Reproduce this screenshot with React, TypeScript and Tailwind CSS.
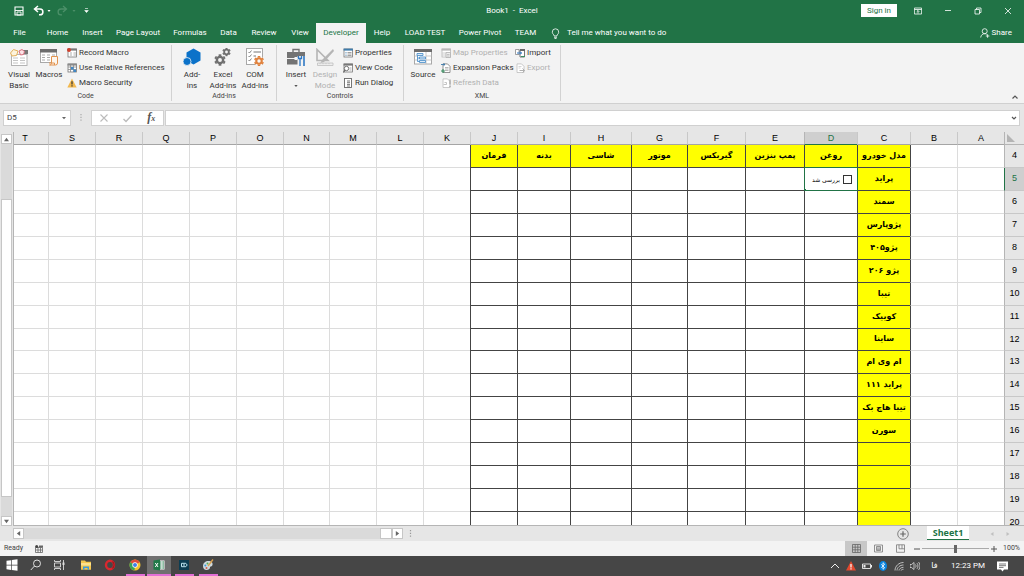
import type { ReactNode } from "react";
import clsx from "clsx";

const UI_FONT = "font-['Roboto','Noto_Sans',sans-serif]";
const GRID_FONT = "font-['Liberation_Sans',sans-serif]";
const FA_FONT = "font-['DejaVu_Sans',sans-serif]";

function Svg({
  size = "size-[18px]",
  box = 18,
  children,
}: {
  size?: string;
  box?: number;
  children: ReactNode;
}) {
  return (
    <svg className={clsx("shrink-0", size)} viewBox={`0 0 ${box} ${box}`} fill="none" aria-hidden="true">
      {children}
    </svg>
  );
}

/* ---------- ribbon icons ---------- */

function Gear({ cx, cy, r, color }: { cx: number; cy: number; r: number; color: string }) {
  return (
    <g stroke={color}>
      <circle cx={cx} cy={cy} r={r * 0.55} strokeWidth={r * 0.42} />
      {[0, 60, 120, 180, 240, 300].map((a) => (
        <path
          key={a}
          d={`M${cx} ${cy - r * 0.7}V${cy - r}`}
          strokeWidth={r * 0.48}
          transform={`rotate(${a} ${cx} ${cy})`}
        />
      ))}
    </g>
  );
}

const VisualBasicIcon = () => (
  <Svg size="h-[18px] w-5">
    <rect x="1.5" y="6.5" width="15.5" height="11" fill="#fff" stroke="#b4b4b4" />
    <path d="M11 2h7v4h-7z" fill="#777" />
    <path d="M3 10h5M3 12.5h5M3 15h5M10 10h5M10 12.5h5M10 15h5" stroke="#c4c4c4" />
    <path d="M3.500 1.500 8 3 6.500 7.500 2 8 .5 5z" fill="#fdf3dc" stroke="#e3b15a" />
    <path d="m9 3 3-1.500 2.500 2-1 3-3 .5z" fill="#fbe3e6" stroke="#d9707f" />
  </Svg>
);

const MacrosIcon = () => (
  <Svg>
    <rect x=".5" y="1.500" width="16" height="13" fill="#fff" stroke="#a8a8a8" />
    <path d="M0 1h17v3.500H0z" fill="#6d6d6d" />
    <path d="M2 7h3M7 7h3M12 7h3M2 9.500h3M7 9.500h3M2 12h3M7 12h3" stroke="#aaa" />
    <path d="M11.500 8.500h6v6.500a2 2 0 0 1-2 2H9.500c1.500 0 2-1 2-2z" fill="#fdf6ee" stroke="#e29450" />
    <path d="M9 15h5.500v2" stroke="#e29450" />
  </Svg>
);

const AddinsIcon = () => (
  <Svg>
    <path d="m10.500.5 7 4v8l-7 4-7-4v-8z" fill="#0b72c9" />
    <circle cx="4" cy="13.500" r="4" fill="#0b72c9" stroke="#f3f3f3" strokeWidth=".8" />
  </Svg>
);

const ExcelAddinsIcon = () => (
  <Svg>
    <Gear cx={6} cy={12} r={5.7} color="#6f6f6f" />
    <Gear cx={12.5} cy={4} r={4.2} color="#6f6f6f" />
  </Svg>
);

const ComAddinsIcon = () => (
  <Svg>
    <rect x=".5" y=".5" width="16" height="16" fill="#fff" stroke="#a8a8a8" />
    <path d="m2.500 4 1 1 2-2.500M2.500 8l1 1 2-2.500M2.500 12l1 1 2-2.500" stroke="#777" strokeWidth=".9" />
    <path d="M7.500 4H15M7.500 8H10" stroke="#777" />
    <circle cx="13" cy="13" r="5" fill="#f8f8f8" />
    <Gear cx={13} cy={13} r={5} color="#e0813c" />
  </Svg>
);

const InsertIcon = () => (
  <Svg>
    <path d="M6 4V1.500h6V4" stroke="#737373" strokeWidth="1.400" />
    <path d="M0 4h18v6H0zM0 11h18v5.500H0z" fill="#737373" />
    <path d="M7.500 9h3v3h-3z" fill="#f3f3f3" />
    <path d="M10.500 8h8v10h-8z" fill="#f3f3f3" />
    <path d="M11.500 8v2.500h3V8M13 10.500V18" stroke="#2f78c4" strokeWidth="1.300" />
    <path d="M17 8v10" stroke="#2f78c4" strokeWidth="1.600" />
  </Svg>
);

const DesignIcon = () => (
  <Svg>
    <path d="M1 1.500v11h11z" stroke="#b5b5b5" strokeWidth="1.600" />
    <path d="m17 1-11 11-1.500 3L8 14 18 3z" fill="#b5b5b5" />
    <path d="M1.500 15h15.500v2.500H1.500z" fill="#eee" stroke="#bfbfbf" strokeWidth=".8" />
    <path d="M4 15v1.200M7 15v1.200M10 15v1.200M13 15v1.200" stroke="#bfbfbf" strokeWidth=".7" />
  </Svg>
);

const SourceIcon = () => (
  <Svg>
    <rect x=".5" y="1.500" width="17" height="14.500" fill="#fff" stroke="#a8a8a8" />
    <path d="M0 1h18v3H0z" fill="#6d6d6d" />
    <path d="M12 4v12M12 8h5.500M12 12h5.500M.5 8h3M.5 12h3" stroke="#bbb" strokeWidth=".8" />
    <path
      d="M3 5.500h6v2H3zM5.500 9h6v2h-6zM5.500 12.500h6v2h-6zM3.500 8v5.500h2M3.500 10h2"
      fill="#dcebf8"
      stroke="#4189c7"
      strokeWidth=".8"
    />
  </Svg>
);

function SmallTable({
  color = "#777",
  head = color,
  children,
}: {
  color?: string;
  head?: string;
  children?: ReactNode;
}) {
  return (
    <Svg size="size-[10px]" box={10}>
      <rect x="1" y="1" width="8.500" height="8" fill="#fff" stroke={color} strokeWidth=".8" />
      <path d="M.6.6h9.300v2H.6z" fill={head} />
      {children}
    </Svg>
  );
}

const RecordIcon = () => (
  <SmallTable>
    <path d="M3 5h2M6.500 5H9M3 7h2M6.500 7H9" stroke="#999" strokeWidth=".8" />
    <circle cx="2" cy="2" r="2" fill="#d0402b" />
  </SmallTable>
);
const RelativeIcon = () => (
  <SmallTable head="#8a8a8a">
    <path d="M1 4h8.500M1 6.500h8.500M3.500 1v8M6.500 1v8" stroke="#888" strokeWidth=".8" />
    <path d="M4 4h2.500v2.500H4zM6.500 6.500H9V9H6.500z" fill="#4189c7" />
  </SmallTable>
);
const SecurityIcon = () => (
  <Svg size="size-[10px]" box={10}>
    <path d="M5 .5 9.700 9.500H.3z" fill="#f2b84e" />
    <path d="M5 3.200v3.200M5 7.300v1.200" stroke="#333" strokeWidth="1.200" />
  </Svg>
);
const PropertiesIcon = () => (
  <SmallTable head="#3f7cab">
    <path d="M2.500 4.500h1M2.500 6h1M2.500 7.500h1" stroke="#3f7cab" strokeWidth=".8" />
    <path d="M4.500 4.500h4M4.500 6h4M4.500 7.500h4" stroke="#888" strokeWidth=".8" />
  </SmallTable>
);
const ViewCodeIcon = () => (
  <SmallTable>
    <path d="M6.500 5h2M6.500 7h2" stroke="#999" strokeWidth=".8" />
    <circle cx="3.500" cy="5.500" r="2.200" fill="#fff" stroke="#666" strokeWidth=".9" />
    <path d="M2 7.200.3 9.500" stroke="#666" strokeWidth="1.200" />
  </SmallTable>
);
const RunDialogIcon = () => (
  <Svg size="size-[10px]" box={10}>
    <rect x="1.500" y=".5" width="7" height="9" fill="#fff" stroke="#666" strokeWidth=".9" />
    <path d="M4 3h3M4 4.700h3M4 6.400h3M4 8h3" stroke="#555" strokeWidth=".8" />
  </Svg>
);
const MapIcon = () => (
  <SmallTable color="#b8b8b8">
    <path d="M1 5h4M1 7h4" stroke="#c4c4c4" strokeWidth=".8" />
    <path d="M5 4.500h4.500V9.500H5z" fill="#eee" stroke="#b0b0b0" strokeWidth=".8" />
    <path d="M6 6.500h2.500M6 8h2.500" stroke="#b0b0b0" strokeWidth=".7" />
  </SmallTable>
);

function PageIcon({ color, children }: { color: string; children: ReactNode }) {
  return (
    <Svg size="size-[10px]" box={10}>
      <path d="M2 .9h4.500L9 3.400v6.100H2z" fill="#fff" stroke={color} strokeWidth=".8" />
      {children}
    </Svg>
  );
}
const ExpansionIcon = () => (
  <PageIcon color="#777">
    <path d="M4 4.500h3.500M4 6h3.500M4 7.500h3.500" stroke="#999" strokeWidth=".7" />
    <path d="M0 1.500h4M2.500.3 4 1.500 2.500 2.700" stroke="#3f7cab" strokeWidth=".9" />
    <path d="M0 8h4M2 6v4" stroke="#3a8f62" strokeWidth="1.100" />
  </PageIcon>
);
const RefreshIcon = () => (
  <PageIcon color="#bdbdbd">
    <path d="M3.500 4.500h2v2h-3" stroke="#b5b5b5" strokeWidth=".8" />
    <path d="M9 1.500v5M9 7.700v1.600" stroke="#aaa" strokeWidth="1.400" />
  </PageIcon>
);
const ImportIcon = () => (
  <Svg size="size-[10px]" box={10}>
    <path d="M.5 1.500h3.500v5H.5z" fill="#fff" stroke="#888" strokeWidth=".8" />
    <path d="M5 1.500h4.500v7.500H5z" fill="#fff" stroke="#666" strokeWidth=".9" />
    <path d="M5 1h5v2H5z" fill="#666" />
    <path d="M2 5h4.500M5 3.500 6.500 5 5 6.500" stroke="#2f78c4" strokeWidth="1" />
    <path d="M6 8.500h4" stroke="#3a8f62" />
  </Svg>
);
const ExportIcon = () => (
  <PageIcon color="#bdbdbd">
    <path d="M3.500 3.500h3M3.500 5h2" stroke="#c4c4c4" strokeWidth=".7" />
    <path d="M4.500 7.500h5M7.500 5.500l2 2-2 2" stroke="#b0b0b0" />
  </PageIcon>
);

/* ---------- title bar and tabs ---------- */

function WindowButton({ label, children }: { label: string; children: ReactNode }) {
  return (
    <button aria-label={label} className="flex h-5 w-[30px] items-center justify-center">
      <Svg size="size-2" box={8}>
        {children}
      </Svg>
    </button>
  );
}

function TitleBar() {
  return (
    <header className="grid h-[23px] grid-cols-[1fr_auto_1fr] items-center pb-[2px] text-white">
      <div className="flex items-center pl-[14px]">
        <button aria-label="Save">
          <Svg size="size-[10px]" box={10}>
            <path d="M1 1h8v8H1z" stroke="#fff" strokeWidth="1.100" />
            <path d="M3 6h4v3H3zM1 4.500h8" stroke="#fff" strokeWidth=".9" />
          </Svg>
        </button>
        <button aria-label="Undo" className="ml-[9px] flex items-center gap-[3px]">
          <Svg size="size-[11px]" box={11}>
            <path d="M5 1 1.500 4 5 7M1.500 4H7a2.800 2.800 0 0 1 0 5.800H6" stroke="#fff" strokeWidth="1.500" />
          </Svg>
          <Svg size="size-1" box={4}>
            <path d="M.5 1h3L2 3z" fill="#fff" />
          </Svg>
        </button>
        <button aria-label="Redo" disabled className="ml-[6px] flex items-center gap-1">
          <Svg size="size-[11px]" box={11}>
            <path d="m6 1 3.500 3L6 7m3.500-3H4a2.800 2.800 0 0 0 0 5.800h1" stroke="#4c9069" strokeWidth="1.300" />
          </Svg>
          <Svg size="size-1" box={4}>
            <path d="M.5 1h3L2 3z" fill="#4c9069" />
          </Svg>
        </button>
        <button aria-label="Customize toolbar" className="ml-2">
          <Svg size="size-[5px]" box={5}>
            <path d="M1 .5h3M.7 2.500h3.600L2.500 4.500z" stroke="#fff" strokeWidth=".6" fill="#fff" />
          </Svg>
        </button>
      </div>
      <h1 className="text-[8px] whitespace-pre">Book1  -  Excel</h1>
      <div className="flex items-center justify-end pr-px">
        <button className="mr-[6px] h-[13px] w-9 bg-white text-[8px] leading-[13px] text-[#217346]">Sign in</button>
        <WindowButton label="Ribbon display options">
          <path d="M.4 1h7.200v6H.4zM.4 2.500h7.200M4 6.500v-3M2.700 4.800 4 3.500l1.300 1.300" stroke="#fff" strokeWidth=".8" />
        </WindowButton>
        <WindowButton label="Minimize">
          <path d="M1 3.500h6" stroke="#fff" strokeWidth=".8" />
        </WindowButton>
        <WindowButton label="Restore">
          <path d="M1 2.500h4.500V7H1zM2.500 2.500V1H7v4.500H5.500" stroke="#fff" strokeWidth=".8" />
        </WindowButton>
        <WindowButton label="Close">
          <path d="m1 1 6 6M7 1 1 7" stroke="#fff" strokeWidth=".8" />
        </WindowButton>
      </div>
    </header>
  );
}

const TABS = [
  { name: "File", width: "w-[39px]" },
  { name: "Home", width: "w-[37px]" },
  { name: "Insert", width: "w-[33px]" },
  { name: "Page Layout", width: "w-[58px]" },
  { name: "Formulas", width: "w-[46px]" },
  { name: "Data", width: "w-[31px]" },
  { name: "Review", width: "w-10" },
  { name: "View", width: "w-8" },
  { name: "Developer", width: "w-[50px]" },
  { name: "Help", width: "w-8" },
  { name: "LOAD TEST", width: "w-[54px]" },
  { name: "Power Pivot", width: "w-14" },
  { name: "TEAM", width: "w-[35px]" },
];

function TabStrip() {
  return (
    <nav className="flex h-5 items-stretch text-[8px] whitespace-nowrap text-white">
      {TABS.map((tab) => (
        <button
          key={tab.name}
          className={clsx("shrink-0 text-center", tab.width, tab.name === "Developer" && "bg-[#f3f3f3] text-[#217346]")}
        >
          {tab.name}
        </button>
      ))}
      <button className="ml-[7px] flex items-center gap-[6px]">
        <Svg size="size-[11px]" box={11}>
          <path
            d="M4 8V7C2.800 6 2.300 5 2.300 4a3.200 3.200 0 0 1 6.400 0c0 1-.5 2-1.700 3v1zM4 9.300h3M4.500 10.500h2"
            stroke="#fff"
            strokeWidth=".8"
          />
        </Svg>
        Tell me what you want to do
      </button>
      <button className="mr-3 ml-auto flex items-center gap-[2px]">
        <Svg size="size-[10px]" box={10}>
          <circle cx="4.700" cy="3.200" r="2.500" stroke="#fff" strokeWidth=".8" />
          <path
            d="M.7 9.500c.3-2.500 1.800-3.800 4-3.800.8 0 1.500.2 2 .6M5.800 8h3.600M7.600 6.200v3.600"
            stroke="#fff"
            strokeWidth=".8"
          />
        </Svg>
        Share
      </button>
    </nav>
  );
}

/* ---------- ribbon ---------- */

function BigButton({
  icon,
  lines,
  width,
  disabled,
  menu,
}: {
  icon: ReactNode;
  lines: string[];
  width: string;
  disabled?: boolean;
  menu?: boolean;
}) {
  return (
    <button
      disabled={disabled}
      className={clsx("flex shrink-0 flex-col items-center pt-[3px]", width, disabled && "text-[#b1b1b1]")}
    >
      {icon}
      <span className="mt-[3px] flex flex-col leading-[11px] whitespace-nowrap">
        {lines.map((line) => (
          <span key={line}>{line}</span>
        ))}
      </span>
      {menu && (
        <Svg size="mt-1 size-1" box={4}>
          <path d="M.3 1h3.400L2 3z" fill="#555" />
        </Svg>
      )}
    </button>
  );
}

function SmallButton({ icon, label, disabled }: { icon: ReactNode; label: string; disabled?: boolean }) {
  return (
    <button
      disabled={disabled}
      className={clsx("flex h-[15px] items-center gap-[2px] whitespace-nowrap", disabled && "text-[#b1b1b1]")}
    >
      {icon}
      {label}
    </button>
  );
}

function Group({ name, width, children }: { name: string; width: string; children: ReactNode }) {
  return (
    <section className={clsx("my-[2px] flex shrink-0 flex-col border-r border-[#d2d2d2]", width)}>
      <div className="flex h-12 items-start">{children}</div>
      <h2 className="text-center text-[7px] leading-[10px] text-[#444]">{name}</h2>
    </section>
  );
}

function Ribbon() {
  return (
    <div className="flex h-[61px] border-b border-[#d0d0d0] bg-[#f3f3f3] text-[8px] text-[#333]">
      <Group name="Code" width="w-[172px]">
        <BigButton icon={<VisualBasicIcon />} lines={["Visual", "Basic"]} width="ml-1 w-[30px]" />
        <BigButton icon={<MacrosIcon />} lines={["Macros"]} width="w-[30px]" />
        <div className="ml-[3px]">
          <SmallButton icon={<RecordIcon />} label="Record Macro" />
          <SmallButton icon={<RelativeIcon />} label="Use Relative References" />
          <SmallButton icon={<SecurityIcon />} label="Macro Security" />
        </div>
      </Group>
      <Group name="Add-ins" width="w-[105px]">
        <BigButton icon={<AddinsIcon />} lines={["Add-", "ins"]} width="ml-1 w-8" />
        <BigButton icon={<ExcelAddinsIcon />} lines={["Excel", "Add-ins"]} width="w-[30px]" />
        <BigButton icon={<ComAddinsIcon />} lines={["COM", "Add-ins"]} width="w-[34px]" />
      </Group>
      <Group name="Controls" width="w-[127px]">
        <BigButton icon={<InsertIcon />} lines={["Insert"]} width="ml-1 w-[30px]" menu />
        <BigButton icon={<DesignIcon />} lines={["Design", "Mode"]} width="w-7" disabled />
        <div className="ml-1">
          <SmallButton icon={<PropertiesIcon />} label="Properties" />
          <SmallButton icon={<ViewCodeIcon />} label="View Code" />
          <SmallButton icon={<RunDialogIcon />} label="Run Dialog" />
        </div>
      </Group>
      <Group name="XML" width="w-[157px]">
        <BigButton icon={<SourceIcon />} lines={["Source"]} width="ml-1 w-[30px]" />
        <div className="ml-[3px] w-[74px]">
          <SmallButton icon={<MapIcon />} label="Map Properties" disabled />
          <SmallButton icon={<ExpansionIcon />} label="Expansion Packs" />
          <SmallButton icon={<RefreshIcon />} label="Refresh Data" disabled />
        </div>
        <div>
          <SmallButton icon={<ImportIcon />} label="Import" />
          <SmallButton icon={<ExportIcon />} label="Export" disabled />
        </div>
      </Group>
      <button aria-label="Collapse ribbon" className="mt-auto mr-[5px] mb-[2px] ml-auto">
        <Svg size="size-2" box={8}>
          <path d="m1.500 5.500 2.500-2.500 2.500 2.500" stroke="#555" strokeWidth="1.200" />
        </Svg>
      </button>
    </div>
  );
}

function FormulaBar() {
  return (
    <div className="flex h-7 items-center pr-1 pl-[3px]">
      <div className="flex h-4 w-[68px] items-center border border-[#d0d0d0] bg-white">
        <input
          aria-label="Name box"
          defaultValue="D5"
          className="w-12 min-w-0 flex-1 pl-[3px] text-[8px] text-[#444] outline-none"
        />
        <button aria-label="Names" className="mr-1">
          <Svg size="size-1" box={4}>
            <path d="M0 1h4L2 3.300z" fill="#666" />
          </Svg>
        </button>
      </div>
      <Svg size="mx-[6px] size-2" box={8}>
        <path d="M4 0v8" stroke="#aaa" strokeWidth="1.200" strokeDasharray="1.200 1.600" />
      </Svg>
      <div className="flex h-4 w-[73px] items-center justify-around border border-[#d0d0d0] bg-white">
        <button aria-label="Cancel">
          <Svg size="size-2" box={8}>
            <path d="m.5.5 7 7M7.500.5l-7 7" stroke="#bbb" strokeWidth="1.100" />
          </Svg>
        </button>
        <button aria-label="Enter">
          <Svg size="size-[9px]" box={9}>
            <path d="m.5 5 2.500 2.500 5.500-6" stroke="#bbb" strokeWidth="1.400" />
          </Svg>
        </button>
        <button
          aria-label="Insert function"
          className="font-['Liberation_Serif',serif] text-[12px] leading-3 font-bold text-[#555] italic"
        >
          f<span className="text-[8px]">x</span>
        </button>
      </div>
      <div className="ml-px flex h-4 flex-1 items-center border border-[#d0d0d0] bg-white">
        <input aria-label="Formula" className="h-3 flex-1 pl-1 text-[8px] outline-none" />
        <button aria-label="Expand formula bar" className="mr-[2px]">
          <Svg size="size-[6px]" box={6}>
            <path d="m1 2 2 2 2-2" stroke="#555" strokeWidth="1.200" />
          </Svg>
        </button>
      </div>
    </div>
  );
}

/* ---------- worksheet ---------- */

// The sheet runs right to left, so column A comes first beside the row numbers.
const COLUMNS = [
  { id: "A", width: "w-[47px]" },
  { id: "B", width: "w-[47px]" },
  { id: "C", width: "w-[53px]", title: "مدل خودرو" },
  { id: "D", width: "w-[53px]", title: "روغن" },
  { id: "E", width: "w-[59px]", title: "پمپ بنزین" },
  { id: "F", width: "w-[58px]", title: "گیربکس" },
  { id: "G", width: "w-[56px]", title: "موتور" },
  { id: "H", width: "w-[61px]", title: "شاسی" },
  { id: "I", width: "w-[53px]", title: "بدنه" },
  { id: "J", width: "w-[47px]", title: "فرمان" },
  { id: "K", width: "w-[47px]" },
  { id: "L", width: "w-[47px]" },
  { id: "M", width: "w-[47px]" },
  { id: "N", width: "w-[46px]" },
  { id: "O", width: "w-[47px]" },
  { id: "P", width: "w-[47px]" },
  { id: "Q", width: "w-[47px]" },
  { id: "R", width: "w-[47px]" },
  { id: "S", width: "w-[47px]" },
  { id: "T", width: "w-[47px]" },
];

const CARS = [
  "پراید",
  "سمند",
  "پژوپارس",
  "پژو۴۰۵",
  "پژو ۲۰۶",
  "تیبا",
  "کوییک",
  "ساینا",
  "ام وی ام",
  "پراید ۱۱۱",
  "تیبا هاچ بک",
  "سورن",
];

const FIRST_ROW = 4;
const ROWS = Array.from({ length: 17 }, (_, i) => FIRST_ROW + i);

function Cell({ row, col }: { row: number; col: (typeof COLUMNS)[number] }) {
  const bordered = col.title !== undefined;
  const filled = bordered && (row === FIRST_ROW || col.id === "C");
  const selected = row === 5 && col.id === "D";
  const text = row === FIRST_ROW ? col.title : col.id === "C" ? CARS[row - FIRST_ROW - 1] : undefined;

  return (
    <td
      className={clsx(
        "relative border-b border-l p-0 text-center align-middle text-[8px] leading-[11px] font-bold whitespace-nowrap text-black",
        FA_FONT,
        !selected && "pb-[2px]",
        bordered ? "border-b-[#444]" : "border-b-[#dcdcdc]",
        bordered || col.id === "B" ? "border-l-[#444]" : "border-l-[#dcdcdc]",
        filled ? "bg-[#ffff00]" : "bg-white",
      )}
    >
      {text}
      {selected && (
        <>
          <label className="flex items-center gap-[3px] pr-[5px] text-[6px] font-normal">
            <input type="checkbox" className="size-[9px] appearance-none border border-[#333] bg-white" />
            بررسی شد
          </label>
          <span className="pointer-events-none absolute -top-px -right-px -bottom-px -left-px border border-[#217346]" />
          <span className="pointer-events-none absolute -bottom-[2px] -left-[2px] size-[3px] bg-[#217346]" />
        </>
      )}
    </td>
  );
}

function Sheet() {
  return (
    <div dir="rtl" className="min-w-0 flex-1 overflow-hidden border-b border-l border-[#b5b5b5]">
      <table
        className={clsx("w-[1023px] table-fixed border-separate border-spacing-0 text-[9px] text-black", GRID_FONT)}
      >
        <colgroup>
          <col className="w-5" />
          {COLUMNS.map((col) => (
            <col key={col.id} className={col.width} />
          ))}
        </colgroup>
        <thead>
          <tr className="h-[13px]">
            <th className="border-b border-l border-[#b5b5b5] bg-[#e6e6e6] p-0">
              <Svg size="mr-auto ml-[2px] size-2" box={8}>
                <path d="M0 0v8h8z" fill="#b4b4b4" />
              </Svg>
            </th>
            {COLUMNS.map((col) => (
              <th
                key={col.id}
                scope="col"
                className={clsx(
                  "border-b border-l p-0 text-center leading-3 font-medium",
                  col.id === "D"
                    ? "border-b-[#217346] border-l-[#b5b5b5] bg-[#cfcfcf] text-[#217346]"
                    : "border-b-[#a5a5a5] border-l-[#c8c8c8] bg-[#e6e6e6]",
                )}
              >
                {col.id}
              </th>
            ))}
          </tr>
        </thead>
        <tbody>
          {ROWS.map((row) => (
            <tr key={row} className={row === 12 ? "h-[22px]" : "h-[23px]"}>
              <th
                scope="row"
                className={clsx(
                  "border-b border-l border-b-[#c8c8c8] p-0 pb-[2px] text-center leading-3 font-medium",
                  row === 5 ? "border-l-[#217346] bg-[#cfcfcf] text-[#217346]" : "border-l-[#b5b5b5] bg-[#e6e6e6]",
                )}
              >
                {row}
              </th>
              {COLUMNS.map((col) => (
                <Cell key={col.id} row={row} col={col} />
              ))}
            </tr>
          ))}
        </tbody>
      </table>
    </div>
  );
}

function ScrollButton({ label, size, d }: { label: string; size: string; d: string }) {
  return (
    <button
      aria-label={label}
      className={clsx("flex shrink-0 items-center justify-center border border-[#c6c6c6] bg-white", size)}
    >
      <Svg size="size-[5px]" box={6}>
        <path d={d} fill="#666" />
      </Svg>
    </button>
  );
}

function VerticalScroll() {
  return (
    <div className="flex w-[13px] shrink-0 flex-col pt-[2px] pr-px pl-px">
      <ScrollButton label="Scroll up" size="h-[10px]" d="M0 5h6L3 1z" />
      <div className="flex flex-1 flex-col bg-[#dadada] pt-[55px] pb-[19px]">
        <div className="flex-1 border border-[#c6c6c6] bg-white" />
      </div>
      <ScrollButton label="Scroll down" size="h-[10px]" d="M0 1h6L3 5z" />
    </div>
  );
}

function SheetTabs() {
  return (
    <div className="flex h-[15px] items-center pl-[13px]">
      <div className="flex h-[11px] w-[390px]">
        <ScrollButton label="Scroll left" size="w-[11px]" d="M5 0v6L1 3z" />
        <div className="flex flex-1 justify-end bg-[#dadada]">
          <div className="w-3 border border-[#c6c6c6] bg-white" />
        </div>
        <ScrollButton label="Scroll right" size="w-[11px]" d="M1 0v6l4-3z" />
      </div>
      <Svg size="ml-1 size-2" box={8}>
        <path d="M3.500 0v8" stroke="#999" strokeWidth="1.200" strokeDasharray="1.200 1.600" />
      </Svg>
      <button aria-label="New sheet" className="ml-auto">
        <Svg size="size-3" box={12}>
          <circle cx="6" cy="6" r="5.300" stroke="#777" strokeWidth=".9" />
          <path d="M6 3.200v5.600M3.200 6h5.600" stroke="#666" strokeWidth="1.200" />
        </Svg>
      </button>
      <button
        className={clsx(
          "ml-[18px] h-[14px] w-[42px] self-start border-b border-[#217346] bg-white text-[9px] leading-3 font-bold text-[#217346]",
          "font-['Open_Sans',sans-serif]",
        )}
      >
        Sheet1
      </button>
      <div className="mr-[13px] ml-5 flex gap-[10px]">
        <button aria-label="Previous sheet">
          <Svg size="size-[6px]" box={6}>
            <path d="M4.500 1v4L1.500 3z" fill="#c0c0c0" />
          </Svg>
        </button>
        <button aria-label="Next sheet">
          <Svg size="size-[6px]" box={6}>
            <path d="M1.500 1v4l3-2z" fill="#c0c0c0" />
          </Svg>
        </button>
      </div>
    </div>
  );
}

function StatusBar() {
  return (
    <div className="flex h-[15px] items-center bg-[#f3f3f3] pr-1 pl-1 text-[7px] text-[#444]">
      <span className="w-[19px]">Ready</span>
      <Svg size="ml-3 size-2" box={8}>
        <path d="M.5 2.500h7v5h-7zM.5 5h7M3 2.500v5M5.500 2.500v5" stroke="#666" strokeWidth=".8" />
        <path d="M4 .5h4v2H4z" fill="#666" />
        <circle cx="1.700" cy="1.500" r="1.500" fill="#444" />
      </Svg>
      <div className="ml-auto flex h-full">
        <button aria-label="Normal view" className="flex w-[22px] items-center justify-center bg-[#c8c8c8]">
          <Svg size="size-[9px]" box={9}>
            <path d="M.5.5h8v8h-8zM.5 3.200h8M.5 5.800h8M3.200.5v8M5.800.5v8" stroke="#666" strokeWidth=".8" />
          </Svg>
        </button>
        <button aria-label="Page layout view" className="flex w-[22px] items-center justify-center">
          <Svg size="size-[9px]" box={9}>
            <path d="M.5 1h8v7h-8zM2.500 2.500h4v4h-4zM3 4h3M3 5.300h3" stroke="#777" strokeWidth=".8" />
          </Svg>
        </button>
        <button aria-label="Page break preview" className="flex w-[23px] items-center justify-center">
          <Svg size="size-[9px]" box={9}>
            <path d="M.5.800h8v7.500h-8zM3 .8v4h3v-4M6 4.800h2.500" stroke="#777" strokeWidth=".8" />
          </Svg>
        </button>
      </div>
      <button aria-label="Zoom out" className="ml-[2px]">
        <Svg size="size-[6px]" box={6}>
          <path d="M0 3h6" stroke="#555" />
        </Svg>
      </button>
      <input
        type="range"
        aria-label="Zoom"
        defaultValue={50}
        className="mx-[2px] h-2 w-[67px] appearance-none bg-[linear-gradient(#aaa,#aaa)] bg-[length:100%_1px] bg-center bg-no-repeat [&::-webkit-slider-thumb]:h-2 [&::-webkit-slider-thumb]:w-[3px] [&::-webkit-slider-thumb]:appearance-none [&::-webkit-slider-thumb]:bg-[#666]"
      />
      <button aria-label="Zoom in" className="mr-[6px]">
        <Svg size="size-[6px]" box={6}>
          <path d="M0 3h6M3 0v6" stroke="#555" />
        </Svg>
      </button>
      <button className="w-[17px]">100%</button>
    </div>
  );
}

/* ---------- task bar ---------- */

function TaskButton({
  label,
  running,
  active,
  className,
  children,
}: {
  label: string;
  running?: boolean;
  active?: boolean;
  className?: string;
  children: ReactNode;
}) {
  return (
    <button
      aria-label={label}
      className={clsx("flex h-5 w-6 flex-col items-center", active && "bg-[#707070]", className)}
    >
      <span className="flex h-[18px] items-center">
        <Svg size="size-3" box={12}>
          {children}
        </Svg>
      </span>
      {running && <span className={clsx("h-[2px] bg-[#e36fd6]", active ? "w-full" : "w-[19px]")} />}
    </button>
  );
}

function TrayButton({ label, children }: { label: string; children: ReactNode }) {
  return (
    <button aria-label={label} className="flex w-4 items-center justify-center">
      <Svg size="size-[10px]" box={10}>
        {children}
      </Svg>
    </button>
  );
}

function TaskBar() {
  return (
    <footer className="flex h-5 items-stretch bg-[#464646] text-white">
      <TaskButton label="Start">
        <path
          d="m.5 1.800 4.700-.6v4.500H.5zM5.900 1.100 11.500.3v5.400H5.900zM.5 6.400h4.700v4.500l-4.700-.6zM5.900 6.400h5.600v5.400L5.900 11z"
          fill="#fff"
        />
      </TaskButton>
      <TaskButton label="Search">
        <circle cx="7" cy="4.500" r="3.500" stroke="#eee" strokeWidth=".9" />
        <path d="M4.500 7 .8 11" stroke="#eee" strokeWidth=".9" />
      </TaskButton>
      <TaskButton label="Task view">
        <path d="M.5 1v1.500h6V1M.5 11V9.500h6V11M.5 4h6v4h-6zM9.500 1v10" stroke="#ddd" strokeWidth=".9" />
        <path d="M8.500 3.500h2V6h-2z" fill="#ddd" />
      </TaskButton>
      <TaskButton label="File Explorer" className="ml-[2px]">
        <path d="M1 1.500h4l1 1.200h5v8H1z" fill="#f4c64e" />
        <path d="M1 4h10v2.500H1z" fill="#fbe08f" />
        <path d="M3 7.500h6v3.200H7.500V9h-3v1.700H3z" fill="#3b9bdb" />
      </TaskButton>
      <TaskButton label="Opera">
        <ellipse cx="6" cy="6" rx="4" ry="4.200" stroke="#d9272e" strokeWidth="2.400" />
        <path d="M8.500 2.500c2 2 2 5 0 7" stroke="#a5161c" strokeWidth="1.400" />
      </TaskButton>
      <TaskButton label="Chrome" className="ml-px" running>
        <circle cx="6" cy="6" r="5.500" fill="#f2c230" />
        <path d="M6 6 1.200 3.300A5.500 5.500 0 0 1 10.800 3.300z" fill="#df4b3c" />
        <path d="M6 6 1.200 3.300A5.500 5.500 0 0 0 5.500 11.500z" fill="#3ba357" />
        <circle cx="6" cy="6" r="2.700" fill="#fff" />
        <circle cx="6" cy="6" r="2" fill="#3f7fe8" />
      </TaskButton>
      <TaskButton label="Excel" running active>
        <path d="M6 1.500h5.500v9H6z" fill="#fff" />
        <path
          d="M7 3h1.500M9.300 3H11M7 5h1.500M9.300 5H11M7 7h1.500M9.300 7H11M7 9h1.500M9.300 9H11"
          stroke="#1f7a48"
          strokeWidth="1.100"
        />
        <path d="m.5 1.500 6.500-1v11l-6.500-1z" fill="#1f7a48" />
        <path d="m2.300 4 2.700 4M5 4 2.300 8" stroke="#fff" />
      </TaskButton>
      <TaskButton label="Recorder" className="ml-px" running>
        <path d="M1 1h10v10H1z" fill="#0c3d52" />
        <path d="M3.500 4.300h4.300L9.200 6 7.800 7.700H3.500z" stroke="#bfe6f2" />
        <path d="M5 6h2" stroke="#bfe6f2" />
      </TaskButton>
      <TaskButton label="Paint" running>
        <path d="M1 7c0-3 2.500-5 5.500-5S11 4 10.500 6 8 7 8 8.500 6.500 11 4.500 11 1 9.500 1 7z" fill="#cfd9dd" />
        <circle cx="3.300" cy="6.500" r="1" fill="#3d9ad8" />
        <circle cx="5.500" cy="4.500" r="1" fill="#58ad58" />
        <circle cx="4.500" cy="9" r="1" fill="#d65a4a" />
        <path d="M11 .5 6 7" stroke="#dba24e" strokeWidth="1.300" />
      </TaskButton>

      <div className="ml-auto flex">
        <TrayButton label="Show hidden icons">
          <path d="m1 7 4-4 4 4" stroke="#eee" />
        </TrayButton>
        <TrayButton label="Alert">
          <path d="m5 0 5 9.500H0z" fill="#e2492f" />
          <path d="M5 3v3.500M5 7.300v1.200" stroke="#fff" strokeWidth="1.200" />
        </TrayButton>
        <TrayButton label="Battery">
          <path d="M.5 3h8v4.500h-8z" stroke="#eee" strokeWidth=".9" />
          <path d="M9 4h1v2.500H9zM1.500 4h2v2.500h-2z" fill="#eee" />
        </TrayButton>
        <TrayButton label="Bluetooth">
          <ellipse cx="5" cy="5" rx="4" ry="5" fill="#0a84e0" />
          <path d="M3.200 3.300 6.700 6.700 5 8.300V1.700l1.700 1.600-3.500 3.400" stroke="#fff" strokeWidth=".8" />
        </TrayButton>
        <TrayButton label="Network">
          <path
            d="M1 9.500C1 5 5 1.500 9.500 1.500M3 9.500C3 6.500 6 4 9.500 4M5 9.500C5 8 7 6.300 9.500 6.300M7 9.500C7 9 8 8.300 9.500 8.300"
            stroke="#ddd"
            strokeWidth=".8"
          />
        </TrayButton>
        <TrayButton label="Volume">
          <path
            d="M0 3.500h1.500L4 1.500v7L1.500 6.500H0zM5.500 3.500c.7 1 .7 2 0 3M7 2.200c1.300 1.800 1.300 3.800 0 5.600M8.500 1c2 2.500 2 5.500 0 8"
            stroke="#ddd"
            strokeWidth=".8"
          />
        </TrayButton>
        <button lang="fa" className={clsx("w-[23px] text-center text-[8px]", FA_FONT)}>
          فا
        </button>
        <button className="ml-1 w-9 text-[8px] whitespace-nowrap">12:23 PM</button>
        <button aria-label="Notifications" className="mr-4 ml-[11px] flex items-center">
          <Svg size="size-[11px]" box={11}>
            <path d="M0 .5h11v8H7l-1.500 2-1.500-2H0z" fill="#fff" />
            <path d="M2 3h7M2 4.700h7M2 6.400h4.500" stroke="#555" strokeWidth=".8" />
          </Svg>
        </button>
      </div>
    </footer>
  );
}

export default function App() {
  return (
    <div className={clsx("flex h-screen flex-col overflow-hidden bg-[#e6e6e6]", UI_FONT)}>
      <div className="bg-[#217346]">
        <TitleBar />
        <TabStrip />
      </div>
      <Ribbon />
      <FormulaBar />
      <main className="flex min-h-0 flex-1">
        <VerticalScroll />
        <Sheet />
      </main>
      <SheetTabs />
      <StatusBar />
      <TaskBar />
    </div>
  );
}
